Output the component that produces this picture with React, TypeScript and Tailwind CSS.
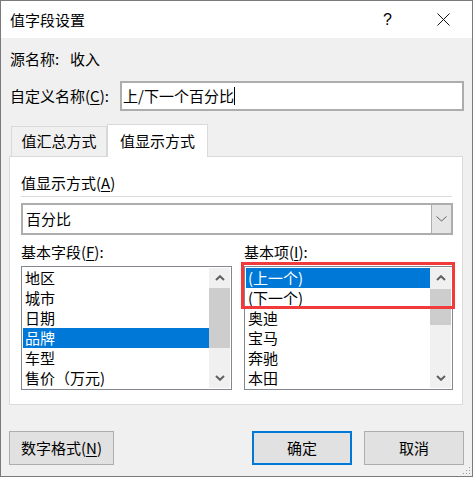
import React from "react";

const Up = () => (
  <svg width="10" height="6" viewBox="0 0 10 6" fill="none">
    <path d="M1 5L5 1.2L9 5" stroke="#606060" strokeWidth="2" />
  </svg>
);

const Down = () => (
  <svg width="10" height="6" viewBox="0 0 10 6" fill="none">
    <path d="M1 1L5 4.8L9 1" stroke="#606060" strokeWidth="2" />
  </svg>
);

function ListBox({
  items,
  selected,
  thumbTop,
  thumbHeight,
}: {
  items: string[];
  selected: number;
  thumbTop: number;
  thumbHeight: number;
}) {
  return (
    <div className="h-[124px] border border-[#828790] bg-white p-px flex">
      <div className="flex-1 flex flex-col">
        {items.map((item, i) => (
          <div
            key={item}
            className={
              "h-[20px] leading-[20px] pl-[2px] whitespace-nowrap " +
              (i === selected ? "bg-[#0078d7] text-white" : "")
            }
          >
            {item}
          </div>
        ))}
      </div>
      <div className="w-[21px] bg-[#f0f0f0] flex flex-col">
        <div className="h-[20px] flex items-center justify-center shrink-0">
          <Up />
        </div>
        <div className="flex-1 flex flex-col">
          <div style={{ height: thumbTop }} />
          <div className="bg-[#cdcdcd]" style={{ height: thumbHeight }} />
        </div>
        <div className="h-[20px] flex items-center justify-center shrink-0">
          <Down />
        </div>
      </div>
    </div>
  );
}

export default function App() {
  return (
    <div className="relative w-[473px] h-[477px] overflow-hidden bg-[#f0f0f0] border border-[#7a7a7a] flex flex-col text-[15px] text-black font-['Noto_Sans_CJK_SC','Microsoft_YaHei',sans-serif]">
      {/* Title bar */}
      <div className="h-[37px] shrink-0 bg-white flex items-center pl-[9px] pr-[22px]">
        <span className="leading-[20px]">值字段设置</span>
        <span className="ml-auto mr-[45px] text-[16px] leading-[20px] font-['Liberation_Sans',sans-serif]">?</span>
        <svg width="13" height="13" viewBox="0 0 13 13" fill="none">
          <path d="M0.5 0.5L12.5 12.5M12.5 0.5L0.5 12.5" stroke="#111" strokeWidth="1" />
        </svg>
      </div>

      <div className="flex flex-col px-[8px]">
        {/* Source name */}
        <div className="mt-[11px] h-[20px] leading-[20px] pl-px flex">
          <span className="w-[60px]">源名称:</span>
          <span>收入</span>
        </div>

        {/* Custom name */}
        <div className="mt-[12px] h-[30px] flex items-center">
          <span className="w-[111px] pl-px leading-[20px] whitespace-nowrap">
            自定义名称(<span className="underline underline-offset-2">C</span>):
          </span>
          <div className="flex-1 h-[30px] border-2 border-[#adadad] bg-white flex items-center pl-px">
            <span className="leading-[20px] text-[15px]">上/下一个百分比</span>
            <span className="w-px h-[18px] bg-black" />
          </div>
        </div>

        {/* Tabs */}
        <div className="mt-[13px] h-[32px] flex items-end pl-[2px]">
          <div className="w-[96px] h-[30px] border border-b-0 border-[#d9d9d9] bg-[#f0f0f0] flex items-center justify-center">
            值汇总方式
          </div>
          <div className="relative z-10 -mb-px w-[101px] h-[33px] border border-b-0 border-[#d9d9d9] bg-white flex items-center justify-center">
            值显示方式
          </div>
        </div>

        {/* Tab panel */}
        <div className="h-[249px] mr-px border border-[#d9d9d9] bg-white flex flex-col pl-[11px] pr-[9px]">
          <div className="mt-[16px] h-[20px] leading-[20px]">
            值显示方式(<span className="underline underline-offset-2">A</span>)
          </div>
          <div className="mt-[3px] h-px mr-px bg-[#dcdcdc]" />

          <div className="mt-[6px] h-[32px] border-2 border-[#adadad] bg-white flex">
            <div className="flex-1 flex items-center pl-[3px] leading-[20px]">百分比</div>
            <div className="w-[20px] bg-[#e5e5e5] border-l border-[#adadad] flex items-center justify-center">
              <svg width="11" height="6" viewBox="0 0 11 6" fill="none">
                <path d="M0.5 0.5L5.5 5L10.5 0.5" stroke="#606060" strokeWidth="1" />
              </svg>
            </div>
          </div>

          <div className="mt-[7px] flex gap-[12px]">
            <div className="w-[211px] flex flex-col">
              <div className="h-[20px] leading-[20px]">
                基本字段(<span className="underline underline-offset-2">F</span>):
              </div>
              <div className="mt-[4px]">
                <ListBox
                  items={["地区", "城市", "日期", "品牌", "车型", "售价（万元)"]}
                  selected={3}
                  thumbTop={0}
                  thumbHeight={60}
                />
              </div>
            </div>
            <div className="flex-1 flex flex-col">
              <div className="h-[20px] leading-[20px]">
                基本项(<span className="underline underline-offset-2">I</span>):
              </div>
              <div className="mt-[4px] relative">
                <ListBox
                  items={["(上一个)", "(下一个)", "奥迪", "宝马", "奔驰", "本田"]}
                  selected={0}
                  thumbTop={1}
                  thumbHeight={36}
                />
                {/* red highlight annotation */}
                <div className="absolute left-[-3px] top-[-4px] w-[214px] h-[47px] border-[3px] border-[#f23a3a] pointer-events-none" />
              </div>
            </div>
          </div>
        </div>

        {/* Buttons */}
        <div className="mt-[26px] h-[34px] flex items-center">
          <button className="w-[105px] h-[34px] bg-[#e1e1e1] border border-[#adadad] leading-[20px]">
            数字格式(<span className="underline underline-offset-2">N</span>)
          </button>
          <button className="ml-auto w-[100px] h-[34px] bg-[#e1e1e1] border-2 border-[#0078d7] leading-[20px]">
            确定
          </button>
          <button className="ml-[12px] w-[100px] h-[34px] bg-[#e1e1e1] border border-[#adadad] leading-[20px]">
            取消
          </button>
        </div>
      </div>

      {/* resize grip */}
      <svg className="absolute right-[1px] bottom-[1px]" width="10" height="10" viewBox="0 0 10 10">
        <rect x="8" y="2" width="1" height="1" fill="#9a9a9a" />
        <rect x="5" y="5" width="1" height="1" fill="#9a9a9a" />
        <rect x="8" y="5" width="1" height="1" fill="#9a9a9a" />
        <rect x="2" y="8" width="1" height="1" fill="#9a9a9a" />
        <rect x="5" y="8" width="1" height="1" fill="#9a9a9a" />
        <rect x="8" y="8" width="1" height="1" fill="#9a9a9a" />
      </svg>
    </div>
  );
}
